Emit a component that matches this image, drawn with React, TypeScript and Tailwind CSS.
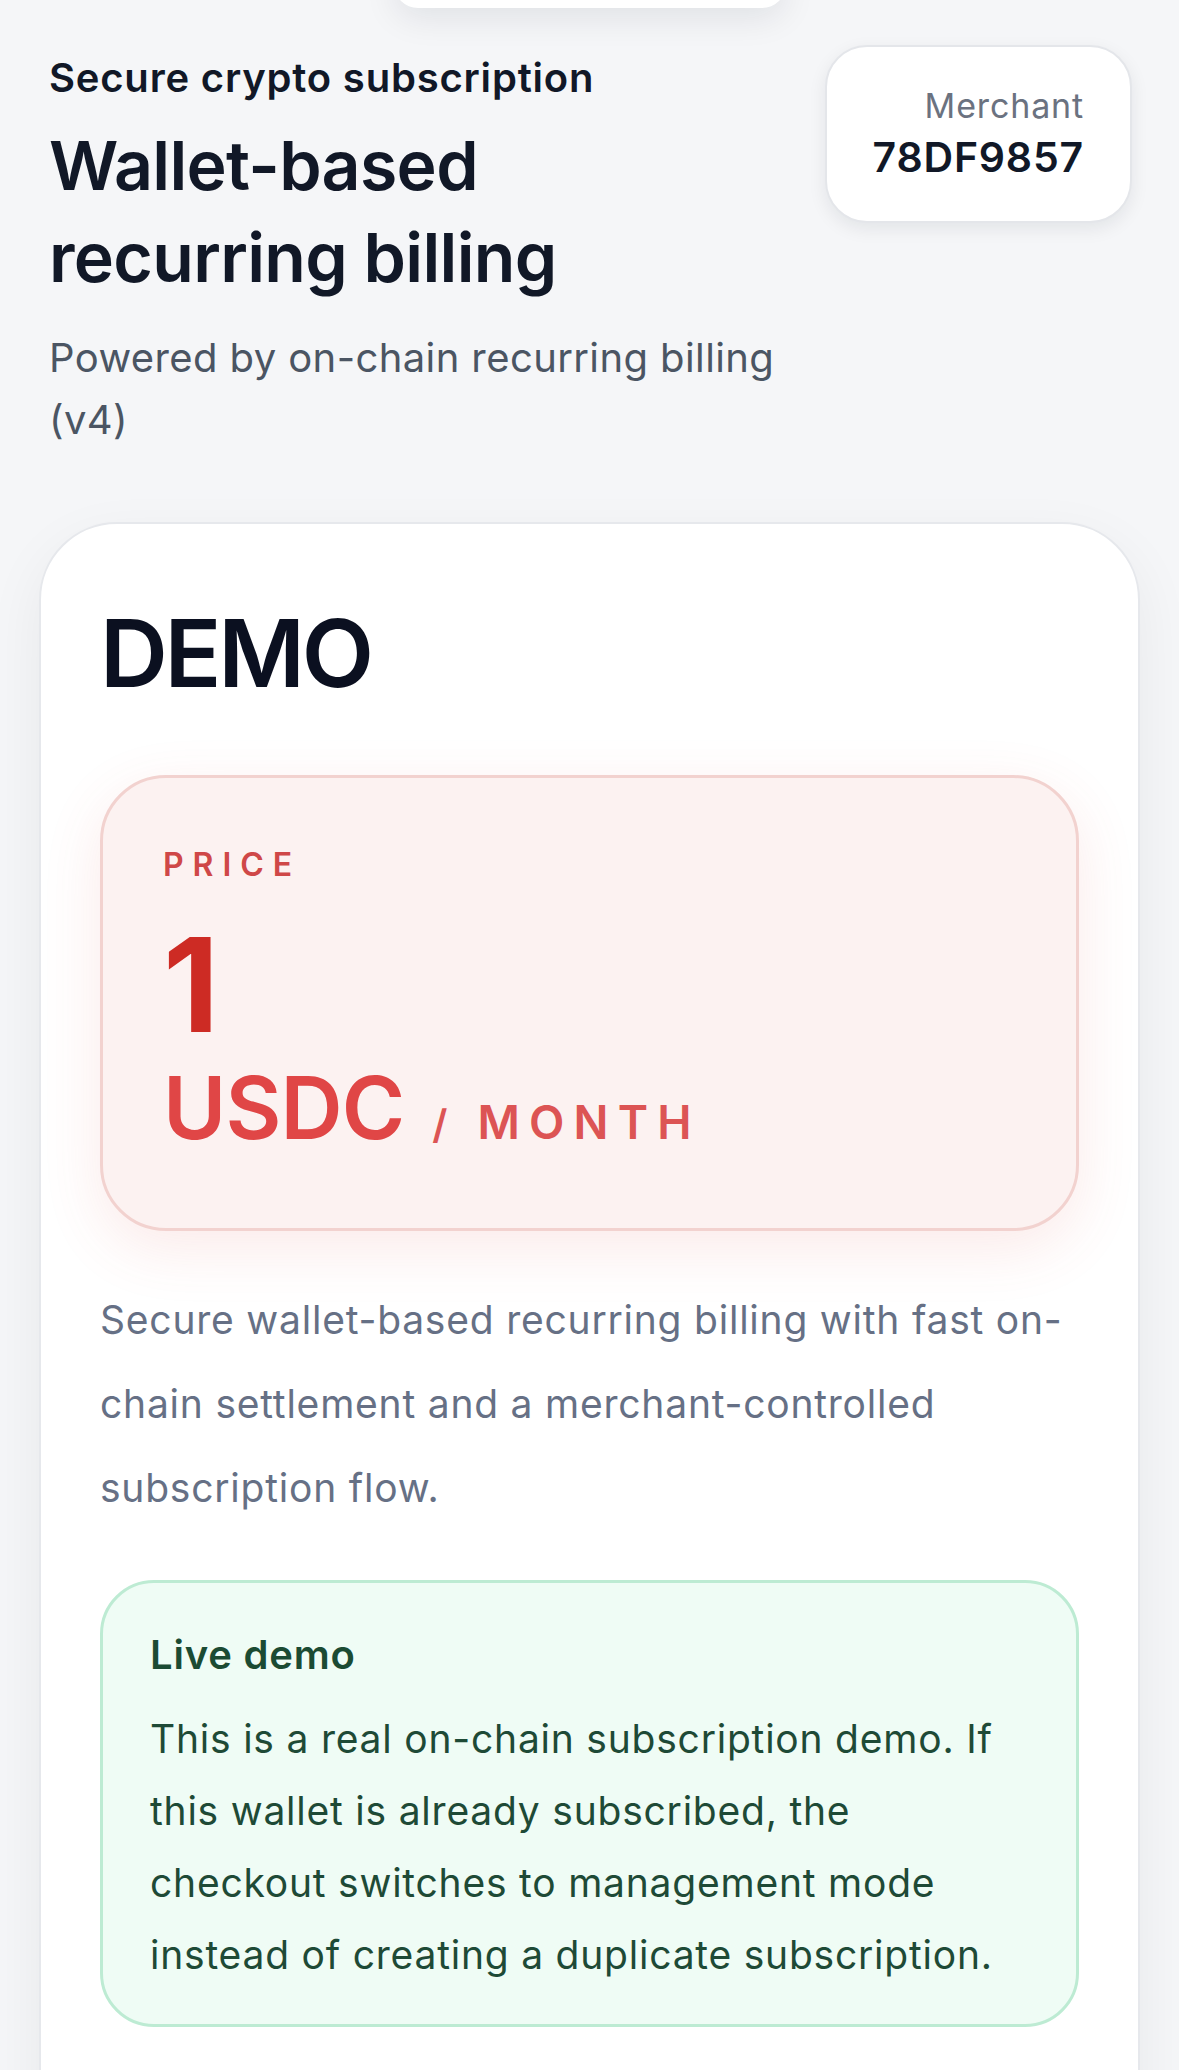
import React from 'react';

export default function App() {
  return (
    <div className="min-h-screen overflow-hidden bg-[#f5f6f8] font-[family-name:Inter,'Noto_Sans',sans-serif] antialiased">
      {/* Floating nav pill, scrolled almost out of view */}
      <div className="flex justify-center">
        <div className="-mt-[40px] h-[48px] w-[392px] rounded-[30px] bg-white shadow-[0_10px_34px_rgba(15,23,42,0.09)]" />
      </div>

      {/* Header */}
      <div className="flex items-start justify-between gap-8 pl-[49px] pr-[47px] pt-[37px]">
        <div className="flex-1 pt-[9px]">
          <p className="text-[40px] font-semibold leading-[48px] tracking-[0.02em] text-[#111827]">
            Secure crypto subscription
          </p>
          <h1 className="mt-[17px] text-[68px] font-semibold leading-[92px] tracking-[-0.01em] text-[#111827]">
            Wallet-based
            <br />
            recurring billing
          </h1>
          <p className="mt-[24px] text-[40px] leading-[62px] tracking-[0.01em] text-[#4b5563]">
            Powered by on-chain recurring billing (v4)
          </p>
        </div>
        <div className="shrink-0 rounded-[42px] border-2 border-[#e4e6ea] bg-white px-[46px] pt-[37px] pb-[38px] text-right shadow-[0_6px_18px_rgba(15,23,42,0.08)]">
          <p className="text-[34px] leading-[44px] tracking-[0.025em] text-[#6b7280]">Merchant</p>
          <p className="mt-[3px] text-[41px] font-semibold leading-[52px] tracking-[0.02em] text-[#111827]">
            78DF9857
          </p>
        </div>
      </div>

      {/* Main card */}
      <div className="mx-[39px] mt-[71px] rounded-[78px] border-2 border-[#e6e8ec] bg-white px-[59px] pt-[82px] pb-[240px] shadow-[0_20px_60px_rgba(15,23,42,0.06)]">
        <h2 className="text-[94px] font-semibold leading-[94px] tracking-[-0.035em] text-[#0b1020]">DEMO</h2>

        <div className="mt-[75px] rounded-[66px] border-[3px] border-[#f2d2cf] bg-[#fcf2f1] px-[60px] pt-[67px] pb-[71px] shadow-[0_18px_60px_rgba(225,80,70,0.12)]">
          <p className="text-[32px] font-semibold leading-[40px] tracking-[0.28em] text-[#cf4848]">PRICE</p>
          <p className="mt-[35px] text-[130px] font-bold leading-[130px] text-[#cd2b24]">1</p>
          <div className="mt-[15px] flex items-baseline">
            <span className="text-[86px] font-semibold leading-[86px] tracking-[-0.01em] text-[#e04646]">USDC</span>
            <span className="ml-[28px] text-[40px] font-semibold text-[#dc5454]">/</span>
            <span className="ml-[30px] text-[46px] font-semibold tracking-[0.2em] text-[#dc5454]">MONTH</span>
          </div>
        </div>

        <p className="mt-[47px] text-[39px] leading-[84px] tracking-[0.02em] text-[#667085]">
          Secure wallet-based recurring billing with fast on-chain settlement and a merchant-controlled
          subscription flow.
        </p>

        <div className="mt-[50px] rounded-[54px] border-[3px] border-[#bdebd3] bg-[#effcf5] px-[47px] pt-[48px] pb-[33px]">
          <p className="text-[40px] font-semibold leading-[48px] tracking-[0.02em] text-[#1b4b33]">Live demo</p>
          <p className="mt-[24px] text-[39px] leading-[72px] tracking-[0.02em] text-[#1e4a36]">
            This is a real on-chain subscription demo. If this wallet is already subscribed, the checkout
            switches to management mode instead of creating a duplicate subscription.
          </p>
        </div>
      </div>
    </div>
  );
}
